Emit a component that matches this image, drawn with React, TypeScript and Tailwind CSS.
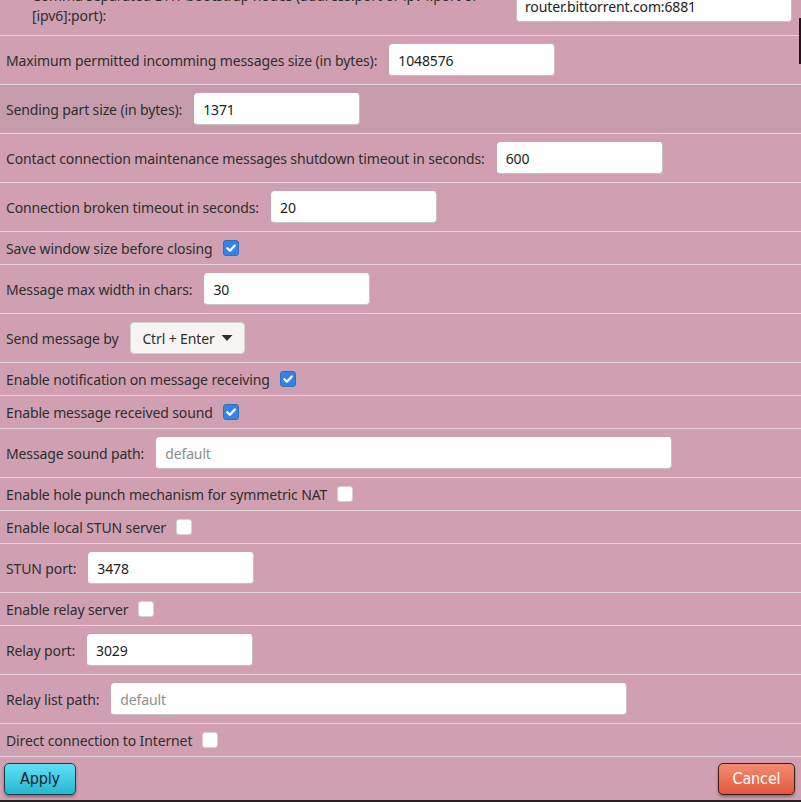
import React from 'react';

type Row =
  | { kind: 'input'; label: string; value?: string; placeholder?: string; width: number; dark?: boolean }
  | { kind: 'check'; label: string; checked: boolean }
  | { kind: 'select'; label: string; value: string };

const rows: Row[] = [
  { kind: 'input', label: 'Maximum permitted incomming messages size (in bytes):', value: '1048576', width: 166 },
  { kind: 'input', label: 'Sending part size (in bytes):', value: '1371', width: 166, dark: true },
  { kind: 'input', label: 'Contact connection maintenance messages shutdown timeout in seconds:', value: '600', width: 166 },
  { kind: 'input', label: 'Connection broken timeout in seconds:', value: '20', width: 166 },
  { kind: 'check', label: 'Save window size before closing', checked: true },
  { kind: 'input', label: 'Message max width in chars:', value: '30', width: 166 },
  { kind: 'select', label: 'Send message by', value: 'Ctrl + Enter' },
  { kind: 'check', label: 'Enable notification on message receiving', checked: true },
  { kind: 'check', label: 'Enable message received sound', checked: true },
  { kind: 'input', label: 'Message sound path:', placeholder: 'default', width: 516 },
  { kind: 'check', label: 'Enable hole punch mechanism for symmetric NAT', checked: false },
  { kind: 'check', label: 'Enable local STUN server', checked: false },
  { kind: 'input', label: 'STUN port:', value: '3478', width: 166 },
  { kind: 'check', label: 'Enable relay server', checked: false },
  { kind: 'input', label: 'Relay port:', value: '3029', width: 166 },
  { kind: 'input', label: 'Relay list path:', placeholder: 'default', width: 516 },
  { kind: 'check', label: 'Direct connection to Internet', checked: false },
];

function Check({ checked }: { checked: boolean }) {
  if (checked)
    return (
      <span className="ml-[10px] w-4 h-4 rounded-[3px] bg-[#3584e4] border border-[#2a6fc4] flex items-center justify-center">
        <svg width="12" height="12" viewBox="0 0 12 12">
          <path d="M2.3 6.2 L5 8.8 L9.8 3.5" fill="none" stroke="white" strokeWidth="2.2" strokeLinecap="round" strokeLinejoin="round" />
        </svg>
      </span>
    );
  return <span className="ml-[10px] w-4 h-4 rounded-[3px] bg-white border border-[#d8d0d2]" />;
}

function Field({ value, placeholder, width }: { value?: string; placeholder?: string; width: number }) {
  return (
    <div
      className="ml-3 h-8 rounded-[4px] bg-white border border-[#c8c0c2] border-t-white border-l-white px-2 flex items-center"
      style={{ width }}
    >
      {value ? <span className="text-[#222]">{value}</span> : <span className="text-[#8e8e8e]">{placeholder}</span>}
    </div>
  );
}

export default function App() {
  return (
    <div
      className="w-[801px] h-[802px] overflow-hidden bg-[#d0a0b2] text-[#2e2e2e] text-[14px] tracking-[-0.13px] border-b-2 border-[#222] relative"
      style={{ fontFamily: '"Noto Sans", "Open Sans", sans-serif' }}
    >
      <div className="absolute right-0 top-[18px] w-[2px] h-[46px] bg-[#1a1a1a]" />
      <div className="h-[36px] border-b border-[#e4d4d9] flex items-start overflow-hidden">
        <div className="pl-[32px] w-[516px] shrink-0 whitespace-nowrap overflow-hidden leading-[20px] -mt-[14px]">
          Comma separated DHT bootstrap nodes (address:port or ipv4:port or
          <br />
          [ipv6]:port):
        </div>
        <div className="-mt-[10px] w-[276px] h-8 rounded-[4px] bg-white border border-[#c8c0c2] border-t-white px-2 flex items-center text-[#222]">
          router.bittorrent.com:6881
        </div>
      </div>
      {rows.map((r, i) => (
        <div
          key={i}
          className={`flex items-center pl-[6px] border-b border-[#e4d4d9] ${
            r.kind === 'check' ? 'h-[33px]' : 'h-[49px]'
          } ${r.kind === 'input' && r.dark ? 'bg-[#c69cac]' : ''}`}
        >
          <span className="whitespace-nowrap">{r.label}</span>
          {r.kind === 'input' && <Field value={r.value} placeholder={r.placeholder} width={r.width} />}
          {r.kind === 'check' && <Check checked={r.checked} />}
          {r.kind === 'select' && (
            <div className="ml-3 h-8 px-[11px] rounded-[4px] bg-[#f6f5f4] border border-[#d8d2d0] flex items-center gap-[6px] text-[#2e2e2e]">
              <span>{r.value}</span>
              <svg width="12" height="8" viewBox="0 0 12 8">
                <path d="M0.5 1 L11.5 1 L6 7 Z" fill="#2e2e2e" />
              </svg>
            </div>
          )}
        </div>
      ))}
      <div className="flex items-center justify-between pl-1 pr-[6px] pt-[6px]">
        <button
          className="w-[72px] h-8 rounded-[5px] border border-[#1f3a40] bg-gradient-to-b from-[#5de0f4] to-[#22b8d2] text-[#12202a] shadow-[0_2px_3px_rgba(0,0,0,0.35)] text-[16px]"
          style={{ fontFamily: '"DejaVu Sans Condensed", "DejaVu Sans", sans-serif' }}
        >
          Apply
        </button>
        <button
          className="w-[77px] h-8 rounded-[5px] border border-[#3a1a14] bg-gradient-to-b from-[#f58a70] to-[#e0583c] text-white shadow-[0_2px_3px_rgba(0,0,0,0.35)] text-[16px]"
          style={{ fontFamily: '"DejaVu Sans Condensed", "DejaVu Sans", sans-serif' }}
        >
          Cancel
        </button>
      </div>
    </div>
  );
}
